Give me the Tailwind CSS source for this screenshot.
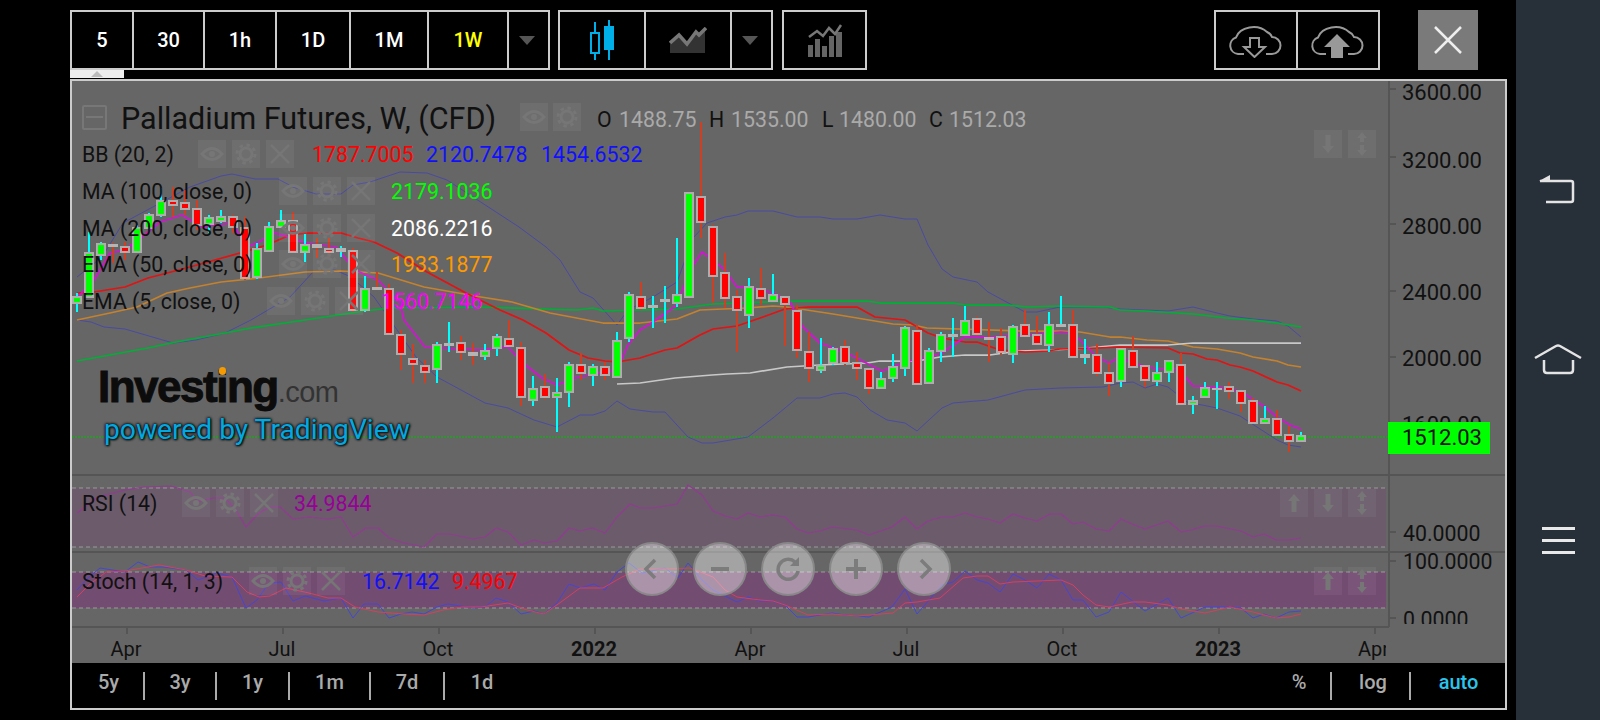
<!DOCTYPE html>
<html lang="en">
<head>
<meta charset="UTF-8" />
<title>Palladium Futures chart</title>
<script src="https://cdn.jsdelivr.net/npm/@tailwindcss/browser@4"></script>
</head>
<body class="bg-black">
<svg width="0" height="0" class="absolute">
	<symbol id="eye" viewBox="0 0 28 28"><path d="M4 14Q14 3 24 14Q14 25 4 14Z" fill="none" stroke="#767676" stroke-width="3"/><circle cx="14" cy="14" r="3" fill="#767676"/></symbol>
	<symbol id="gear" viewBox="0 0 28 28"><circle cx="14" cy="14" r="6" fill="none" stroke="#767676" stroke-width="3"/><circle cx="14" cy="14" r="9" fill="none" stroke="#767676" stroke-width="3" stroke-dasharray="3.5 3.6"/></symbol>
	<symbol id="cross" viewBox="0 0 28 28"><path d="M5 5L23 23M23 5L5 23" stroke="#767676" stroke-width="2.5"/></symbol>
	<symbol id="up" viewBox="0 0 28 28"><path d="M14 5L20 12H16.5V23H11.5V12H8Z" fill="#767676"/></symbol>
	<symbol id="down" viewBox="0 0 28 28"><path d="M14 23L20 16H16.5V5H11.5V16H8Z" fill="#767676"/></symbol>
	<symbol id="updown" viewBox="0 0 28 28"><path d="M14 2L19 8H16V12H12V8H9ZM14 26L19 20H16V15H12V20H9Z" fill="#767676"/></symbol>
</svg>

<div class="w-[1600px] h-[720px] overflow-hidden flex font-['Roboto',sans-serif]">
	<div class="w-[1516px] h-full bg-black">
		<!-- toolbar -->
		<div class="flex h-[60px] mt-[10px] pl-[70px] text-white text-[20px] font-medium">
			<div class="flex border-2 border-[#ccc]">
				<div class="w-[62px] border-r-2 border-[#ccc] flex items-center justify-center">5</div>
				<div class="w-[71px] border-r-2 border-[#ccc] flex items-center justify-center">30</div>
				<div class="w-[72px] border-r-2 border-[#ccc] flex items-center justify-center">1h</div>
				<div class="w-[74px] border-r-2 border-[#ccc] flex items-center justify-center">1D</div>
				<div class="w-[78px] border-r-2 border-[#ccc] flex items-center justify-center">1M</div>
				<div class="w-[80px] border-r-2 border-[#ccc] flex items-center justify-center text-[#ffff00]">1W</div>
				<div class="w-[39px] flex items-center justify-center pr-[4px]">
					<svg width="16" height="9" viewBox="0 0 16 9"><path d="M0 0H16L8 9Z" fill="#555"/></svg>
				</div>
			</div>
			<div class="flex border-2 border-[#ccc] ml-[8px]">
				<div class="w-[86px] border-r-2 border-[#ccc] flex items-center justify-center">
					<svg width="30" height="40" viewBox="0 0 30 40">
						<path d="M8 2V40M22 0V40" stroke="#00aee8" stroke-width="2"/>
						<rect x="4" y="13" width="8" height="20" fill="#000" stroke="#00aee8" stroke-width="2"/>
						<rect x="17" y="6" width="10" height="24" fill="#00aee8"/>
					</svg>
				</div>
				<div class="w-[86px] border-r-2 border-[#ccc] flex items-center justify-center">
					<svg width="38" height="26" viewBox="0 0 38 26">
						<path d="M1 26V17L11 8L18 16L29 6L36 1V26Z" fill="#333"/>
						<path d="M1 16L10 8L18 17L27 5L30 8L37 1" fill="none" stroke="#777" stroke-width="3.5"/>
					</svg>
				</div>
				<div class="w-[39px] flex items-center justify-center pr-[3px]">
					<svg width="16" height="9" viewBox="0 0 16 9"><path d="M0 0H16L8 9Z" fill="#555"/></svg>
				</div>
			</div>
			<div class="flex w-[85px] border-2 border-[#ccc] ml-[9px] items-center justify-center">
				<svg width="36" height="33" viewBox="0 0 36 33">
					<path d="M1 21H6V33H1ZM8 15H13V33H8ZM15 22H20V33H15ZM22 12H27V33H22ZM29 8H35V33H29Z" fill="#777" opacity=".85"/>
					<path d="M2 13L10 7L16 12L22 4L28 10L34 1" fill="none" stroke="#777" stroke-width="2.5"/>
				</svg>
			</div>
			<div class="flex border-2 border-[#ccc] ml-[347px]">
				<div class="w-[82px] border-r-2 border-[#ccc] flex items-center justify-center pr-[2px]">
					<svg width="54" height="36" viewBox="0 0 54 36">
						<path d="M16 32H10A8.5 8.5 0 0 1 8 15.5A18 14 0 0 1 39 10A9 9 0 0 1 44 15A8.5 8.5 0 0 1 44 32H38" fill="none" stroke="#999" stroke-width="2"/>
						<path d="M22 16H31V25H37L26.5 35L16 25H22Z" fill="none" stroke="#999" stroke-width="2"/>
					</svg>
				</div>
				<div class="w-[80px] flex items-center justify-center pr-[2px]">
					<svg width="54" height="36" viewBox="0 0 54 36">
						<path d="M16 32H10A8.5 8.5 0 0 1 8 15.5A18 14 0 0 1 39 10A9 9 0 0 1 44 15A8.5 8.5 0 0 1 44 32H38" fill="none" stroke="#999" stroke-width="2"/>
						<path d="M27 12L40 25H33V36H21V25H14Z" fill="#999"/>
					</svg>
				</div>
			</div>
			<div class="w-[60px] ml-[38px] bg-[#7a7a7a] flex items-center justify-center">
				<svg width="30" height="28" viewBox="0 0 30 28"><path d="M2 1L28 27M28 1L2 27" stroke="#eee" stroke-width="2.5"/></svg>
			</div>
		</div>

		<!-- collapse tab -->
		<div class="ml-[70px] w-[54px] h-[8px] bg-[#eee] flex items-center justify-center">
			<svg width="12" height="6" viewBox="0 0 12 6"><path d="M0 6H12L6 0Z" fill="#bbb"/></svg>
		</div>

		<!-- chart frame -->
		<div class="relative ml-[70px] mt-[1px] w-[1437px] h-[631px] border-2 border-[#ccc] bg-[#666] flex flex-col text-[#111]">
			<svg id="plot" class="absolute left-0 top-0" width="1433" height="627" viewBox="72 81 1433 627"></svg>

			<!-- price pane -->
			<div class="relative h-[394px] pt-[22px] text-[21.3px]">
				<div class="flex items-center h-7 pl-[10px]">
					<span class="w-[25px] h-[25px] border-2 border-[#777] rounded-[2px] flex items-center justify-center"><span class="w-[17px] h-[2px] bg-[#777]"></span></span>
					<span class="ml-[14px] w-[399px] pt-[4px] text-[30.5px] leading-7 whitespace-nowrap">Palladium Futures, W, (CFD)</span>
					<span class="w-7 h-7 bg-white/5"><svg width="28" height="28"><use href="#eye"/></svg></span>
					<span class="w-7 h-7 ml-[5px] bg-white/5"><svg width="28" height="28"><use href="#gear"/></svg></span>
					<span class="ml-[16px] w-[22px] pt-[5px]">O</span><span class="w-[90px] pt-[5px] text-[#aaa]">1488.75</span>
					<span class="w-[22px] pt-[5px]">H</span><span class="w-[91px] pt-[5px] text-[#aaa]">1535.00</span>
					<span class="w-[17px] pt-[5px]">L</span><span class="w-[90px] pt-[5px] text-[#aaa]">1480.00</span>
					<span class="w-[20px] pt-[5px]">C</span><span class="pt-[5px] text-[#aaa]">1512.03</span>
				</div>
				<div class="flex flex-col gap-[8.75px] mt-[9px] pl-[10px]">
					<div class="flex items-center h-7">
						<span class="w-[116px] pt-[2px]">BB (20, 2)</span>
						<span class="flex gap-[6px]">
							<span class="w-7 h-7 bg-white/5"><svg width="28" height="28"><use href="#eye"/></svg></span>
							<span class="w-7 h-7 bg-white/5"><svg width="28" height="28"><use href="#gear"/></svg></span>
							<span class="w-7 h-7 bg-white/5"><svg width="28" height="28"><use href="#cross"/></svg></span>
						</span>
						<span class="ml-[18px] w-[114px] pt-[2px] text-[#ff0000]">1787.7005</span>
						<span class="w-[115px] pt-[2px] text-[#1010ff]">2120.7478</span>
						<span class="pt-[2px] text-[#1010ff]">1454.6532</span>
					</div>
					<div class="flex items-center h-7">
						<span class="w-[197px] pt-[2px]">MA (100, close, 0)</span>
						<span class="flex gap-[6px]">
							<span class="w-7 h-7 bg-white/5"><svg width="28" height="28"><use href="#eye"/></svg></span>
							<span class="w-7 h-7 bg-white/5"><svg width="28" height="28"><use href="#gear"/></svg></span>
							<span class="w-7 h-7 bg-white/5"><svg width="28" height="28"><use href="#cross"/></svg></span>
						</span>
						<span class="ml-[16px] pt-[2px] text-[#00ff00]">2179.1036</span>
					</div>
					<div class="flex items-center h-7">
						<span class="w-[197px] pt-[2px]">MA (200, close, 0)</span>
						<span class="flex gap-[6px]">
							<span class="w-7 h-7 bg-white/5"><svg width="28" height="28"><use href="#eye"/></svg></span>
							<span class="w-7 h-7 bg-white/5"><svg width="28" height="28"><use href="#gear"/></svg></span>
							<span class="w-7 h-7 bg-white/5"><svg width="28" height="28"><use href="#cross"/></svg></span>
						</span>
						<span class="ml-[16px] pt-[2px] text-white">2086.2216</span>
					</div>
					<div class="flex items-center h-7">
						<span class="w-[197px] pt-[2px]">EMA (50, close, 0)</span>
						<span class="flex gap-[6px]">
							<span class="w-7 h-7 bg-white/5"><svg width="28" height="28"><use href="#eye"/></svg></span>
							<span class="w-7 h-7 bg-white/5"><svg width="28" height="28"><use href="#gear"/></svg></span>
							<span class="w-7 h-7 bg-white/5"><svg width="28" height="28"><use href="#cross"/></svg></span>
						</span>
						<span class="ml-[16px] pt-[2px] text-[#ff9900]">1933.1877</span>
					</div>
					<div class="flex items-center h-7">
						<span class="w-[185px] pt-[2px]">EMA (5, close, 0)</span>
						<span class="flex gap-[6px]">
							<span class="w-7 h-7 bg-white/5"><svg width="28" height="28"><use href="#eye"/></svg></span>
							<span class="w-7 h-7 bg-white/5"><svg width="28" height="28"><use href="#gear"/></svg></span>
							<span class="w-7 h-7 bg-white/5"><svg width="28" height="28"><use href="#cross"/></svg></span>
						</span>
						<span class="ml-[18px] pt-[2px] text-[#ff00ff]">1560.7146</span>
					</div>
				</div>

				<div class="absolute left-[1242px] top-[49px] flex gap-[6px]">
					<span class="w-7 h-7 bg-white/5"><svg width="28" height="28"><use href="#down"/></svg></span>
					<span class="w-7 h-7 bg-white/5"><svg width="28" height="28"><use href="#updown"/></svg></span>
				</div>

				<!-- watermark -->
				<div class="absolute left-[26px] top-[284px] flex items-baseline leading-none">
					<span class="text-[44px] font-bold tracking-[-1.5px] text-[#0c0c0c] [-webkit-text-stroke:1px_#0c0c0c] font-['Liberation_Sans',sans-serif]">Investing</span>
					<span class="text-[29px] text-[#333] tracking-[-0.5px] font-['Liberation_Sans',sans-serif]">.com</span>
				</div>
				<div class="absolute left-[147px] top-[286px] w-[7px] h-[8px] rounded-full bg-[#f59a00]"></div>
				<div class="absolute left-[32px] top-[333px] text-[28.2px] leading-8 whitespace-nowrap text-[#00a9e2] [text-shadow:0_0_2px_#161616,0_0_3px_#161616,0_0_3px_#161616,1px_1px_2px_#161616]">powered by TradingView</div>

				<!-- price axis -->
				<span class="absolute left-[1330px] top-[1px] text-[22px] leading-[22px]">3600.00</span>
				<span class="absolute left-[1330px] top-[69px] text-[22px] leading-[22px]">3200.00</span>
				<span class="absolute left-[1330px] top-[135px] text-[22px] leading-[22px]">2800.00</span>
				<span class="absolute left-[1330px] top-[201px] text-[22px] leading-[22px]">2400.00</span>
				<span class="absolute left-[1330px] top-[267px] text-[22px] leading-[22px]">2000.00</span>
				<span class="absolute left-[1330px] top-[333px] text-[22px] leading-[22px]">1600.00</span>
				<div class="absolute left-[1316px] top-[341px] w-[102px] h-[32px] bg-[#00ff00] pl-[14px] text-[22px] leading-[32px]">1512.03</div>
			</div>

			<!-- RSI pane -->
			<div class="relative h-[77px] pt-[14px] pl-[10px] text-[21.3px]">
				<div class="flex items-center h-7">
					<span class="w-[100px] pt-[1px]">RSI (14)</span>
					<span class="flex gap-[6px]">
						<span class="w-7 h-7 bg-white/5"><svg width="28" height="28"><use href="#eye"/></svg></span>
						<span class="w-7 h-7 bg-white/5"><svg width="28" height="28"><use href="#gear"/></svg></span>
						<span class="w-7 h-7 bg-white/5"><svg width="28" height="28"><use href="#cross"/></svg></span>
					</span>
					<span class="ml-[16px] pt-[1px] text-[#990099]">34.9844</span>
				</div>
				<div class="absolute left-[1208px] top-[14px] flex gap-[6px]">
					<span class="w-7 h-7 bg-white/5"><svg width="28" height="28"><use href="#up"/></svg></span>
					<span class="w-7 h-7 bg-white/5"><svg width="28" height="28"><use href="#down"/></svg></span>
					<span class="w-7 h-7 bg-white/5"><svg width="28" height="28"><use href="#updown"/></svg></span>
				</div>
				<span class="absolute left-[1331px] top-[48px] text-[21.3px] leading-[22px]">40.0000</span>
			</div>

			<!-- Stoch pane -->
			<div class="relative h-[75px] pt-[15px] pl-[10px] text-[21.3px]">
				<div class="flex items-center h-7">
					<span class="w-[167px] pt-[1px] whitespace-nowrap">Stoch (14, 1, 3)</span>
					<span class="flex gap-[6px]">
						<span class="w-7 h-7 bg-white/5"><svg width="28" height="28"><use href="#eye"/></svg></span>
						<span class="w-7 h-7 bg-white/5"><svg width="28" height="28"><use href="#gear"/></svg></span>
						<span class="w-7 h-7 bg-white/5"><svg width="28" height="28"><use href="#cross"/></svg></span>
					</span>
					<span class="ml-[17px] w-[90px] pt-[1px] text-[#1010ff]">16.7142</span>
					<span class="pt-[1px] text-[#ff0000]">9.4967</span>
				</div>
				<div class="absolute left-[1242px] top-[15px] flex gap-[6px]">
					<span class="w-7 h-7 bg-white/5"><svg width="28" height="28"><use href="#up"/></svg></span>
					<span class="w-7 h-7 bg-white/5"><svg width="28" height="28"><use href="#updown"/></svg></span>
				</div>
				<span class="absolute left-[1331px] top-[-1px] text-[21.3px] leading-[22px]">100.0000</span>
				<div class="absolute left-[1331px] top-[55px] h-[17px] pt-[2px] overflow-hidden text-[21.3px] leading-[22px]">0.0000</div>
			</div>

			<!-- time axis -->
			<div class="relative h-[36px] text-[20px] leading-[24px]">
				<span class="absolute left-[54px] top-[10px] -translate-x-1/2">Apr</span>
				<span class="absolute left-[210px] top-[10px] -translate-x-1/2">Jul</span>
				<span class="absolute left-[366px] top-[10px] -translate-x-1/2">Oct</span>
				<span class="absolute left-[522px] top-[10px] -translate-x-1/2 font-bold">2022</span>
				<span class="absolute left-[678px] top-[10px] -translate-x-1/2">Apr</span>
				<span class="absolute left-[834px] top-[10px] -translate-x-1/2">Jul</span>
				<span class="absolute left-[990px] top-[10px] -translate-x-1/2">Oct</span>
				<span class="absolute left-[1146px] top-[10px] -translate-x-1/2 font-bold">2023</span>
				<div class="absolute left-[1286px] top-[10px] w-[28px] overflow-hidden">Apr</div>
			</div>

			<!-- range bar -->
			<div class="relative flex items-center h-[45px] bg-black text-[20px] font-medium text-[#aaa]">
				<div class="w-[73px] h-[28px] border-r-2 border-[#aaa] flex items-center justify-center pl-[2px] pb-[7px]">5y</div>
				<div class="w-[72px] h-[28px] border-r-2 border-[#aaa] flex items-center justify-center pb-[7px]">3y</div>
				<div class="w-[73px] h-[28px] border-r-2 border-[#aaa] flex items-center justify-center pb-[7px]">1y</div>
				<div class="w-[81px] h-[28px] border-r-2 border-[#aaa] flex items-center justify-center pb-[7px]">1m</div>
				<div class="w-[74px] h-[28px] border-r-2 border-[#aaa] flex items-center justify-center pb-[7px]">7d</div>
				<div class="w-[74px] h-[28px] flex items-center justify-center pb-[7px]">1d</div>
				<div class="ml-auto w-[64px] h-[28px] border-r-2 border-[#aaa] flex items-center justify-center pb-[7px]">%</div>
				<div class="w-[79px] h-[28px] border-r-2 border-[#aaa] flex items-center justify-center pl-[5px] pb-[7px]">log</div>
				<div class="w-[94px] h-[28px] flex items-center justify-center pl-[1px] pb-[7px] text-[#2bc4ea]">auto</div>
			</div>

			<!-- zoom controls -->
			<div class="absolute left-[553px] top-[461px] flex gap-[14px]">
				<div class="w-[54px] h-[54px] rounded-full bg-white/40 border-2 border-[#888] flex items-center justify-center">
					<svg width="24" height="24" viewBox="0 0 24 24"><path d="M15 3L6 12L15 21" fill="none" stroke="#7c7c7c" stroke-width="3.5"/></svg>
				</div>
				<div class="w-[54px] h-[54px] rounded-full bg-white/40 border-2 border-[#888] flex items-center justify-center">
					<svg width="24" height="24" viewBox="0 0 24 24"><path d="M3 12H21" stroke="#7c7c7c" stroke-width="4"/></svg>
				</div>
				<div class="w-[54px] h-[54px] rounded-full bg-white/40 border-2 border-[#888] flex items-center justify-center">
					<svg width="26" height="26" viewBox="0 0 26 26"><path d="M20 6A10 10 0 1 0 23 15" fill="none" stroke="#7c7c7c" stroke-width="3.5"/><path d="M24 1V10H15Z" fill="#7c7c7c"/></svg>
				</div>
				<div class="w-[54px] h-[54px] rounded-full bg-white/40 border-2 border-[#888] flex items-center justify-center">
					<svg width="24" height="24" viewBox="0 0 24 24"><path d="M2 12H22M12 2V22" stroke="#7c7c7c" stroke-width="4"/></svg>
				</div>
				<div class="w-[54px] h-[54px] rounded-full bg-white/40 border-2 border-[#888] flex items-center justify-center">
					<svg width="24" height="24" viewBox="0 0 24 24"><path d="M9 3L18 12L9 21" fill="none" stroke="#7c7c7c" stroke-width="3.5"/></svg>
				</div>
			</div>
		</div>
	</div>

	<!-- android nav bar -->
	<div class="w-[84px] h-full bg-[#272f38] flex flex-col items-center pt-[172px]">
		<svg class="h-[34px] shrink-0" width="60" height="34" viewBox="0 0 60 34">
			<path d="M12 9H43Q45 9 45 11V28Q45 30 43 30H18" fill="none" stroke="#e4e4e4" stroke-width="2.5"/>
			<path d="M11 9L22 3V10Z" fill="#e4e4e4"/>
		</svg>
		<svg class="mt-[137px] h-[32px] shrink-0" width="60" height="32" viewBox="0 0 60 32">
			<path d="M7 15L28 3Q30 2 32 3L53 15" fill="none" stroke="#e4e4e4" stroke-width="2.5"/>
			<path d="M16 17V27Q16 30 19 30H42Q45 30 45 27V17" fill="none" stroke="#e4e4e4" stroke-width="2.5"/>
		</svg>
		<div class="mt-[152px] flex flex-col gap-[9px]">
			<div class="w-[33px] h-[3px] bg-[#e8e8e8]"></div>
			<div class="w-[33px] h-[3px] bg-[#e8e8e8]"></div>
			<div class="w-[33px] h-[3px] bg-[#e8e8e8]"></div>
		</div>
	</div>
</div>

<script>
	// [type, bodyTop, bodyBottom, wickTop, wickBottom] in page pixels, one per week from x=77, 12px apart
	const candles = [
		['g',297,303,293,312],['g',253,297,232,297],['g',244,255,242,260],['dr',244,246,243,263],['r',247,252,242,260],
		['g',228,252,225,253],['g',215,228,213,230],['g',201,215,188,217],['r',201,205,187,217],['r',203,209,190,215],
		['r',209,225,200,230],['g',218,224,215,233],['g',217,221,210,223],['r',217,227,215,233],['r',228,278,217,280],
		['g',249,277,243,279],['g',227,251,222,252],['g',221,227,210,228],['r',221,252,212,253],['g',245,252,234,262],
		['dr',244,247,238,258],['r',249,252,238,258],['dg',248,251,246,257],['r',251,310,248,312],['g',289,310,276,312],
		['dr',287,289,272,290],['r',289,334,284,334],['r',335,354,330,370],['r',359,364,344,383],['r',366,372,360,383],
		['g',345,369,342,383],['dg',343,345,322,352],['r',343,352,336,360],['dr',352,355,343,365],['g',351,356,344,360],
		['g',337,348,334,356],['r',339,346,320,347],['r',348,397,342,406],['g',389,400,376,406],['r',387,397,374,399],
		['g',393,397,378,432],['g',365,392,362,407],['r',365,373,353,380],['g',367,375,364,386],['r',367,375,362,380],
		['g',341,377,332,378],['g',295,338,292,342],['r',297,308,282,310],['dg',305,307,296,328],['dg',299,301,286,323],
		['g',295,303,238,307],['g',193,297,193,297],['r',197,222,122,238],['r',227,276,225,303],['r',273,298,253,308],
		['r',297,310,290,352],['g',287,315,278,328],['r',289,298,268,305],['g',295,301,274,302],['r',297,304,297,346],
		['r',311,350,305,358],['r',352,368,332,382],['g',366,370,338,373],['g',349,363,347,365],['r',347,363,340,365],
		['r',363,368,352,380],['r',369,388,369,394],['g',379,388,372,388],['g',367,378,354,382],['g',328,368,326,376],
		['r',331,384,325,385],['g',351,383,348,383],['g',335,351,332,362],['dg',334,336,318,357],['g',321,335,306,336],
		['r',319,334,317,336],['dr',337,339,322,362],['r',337,352,328,355],['g',327,354,325,363],['r',325,336,310,337],
		['r',335,344,316,345],['g',325,345,312,352],['dg',324,326,296,327],['r',325,357,310,357],['dg',354,357,339,364],
		['r',355,373,344,376],['r',373,383,363,396],['g',349,381,348,387],['r',351,367,336,367],['r',366,380,365,387],
		['g',373,381,362,386],['g',361,372,361,382],['r',365,404,353,405],['g',401,404,396,414],['g',388,397,382,397],
		['dg',388,389,382,409],['r',387,391,382,399],['r',391,403,390,412],['r',401,423,398,423],['g',419,423,406,423],
		['r',419,435,410,436],['r',435,441,426,452],['g',436,441,432,437]
	];

	const lines = {
		bbUpper: '77,277 102,257 123,223 190,187 221,176 232,174 255,179 278,179 293,187 316,194 341,194 353,185 370,182 400,172 427,173 447,180 473,197 519,227 546,247 560,260 580,292 593,298 617,325 628,310 653,297 677,282 693,238 707,223 725,217 737,215 748,211 773,211 797,217 820,217 833,219 857,219 880,215 905,219 917,219 928,245 942,269 953,277 977,282 988,292 1025,312 1037,312 1060,307 1103,307 1120,309 1168,311 1193,307 1217,313 1230,316 1253,319 1277,321 1288,326 1301,337',
		bbLower: '77,320 91,322 104,327 125,329 173,343 196,340 225,333 251,320 290,297 313,272 335,270 351,277 374,297 395,327 416,357 437,377 485,403 508,408 534,420 557,427 580,415 593,415 605,411 617,401 630,409 653,412 665,412 688,437 702,443 713,443 748,437 773,418 797,398 820,398 833,394 845,393 857,397 870,410 887,420 905,423 917,431 942,408 953,403 988,400 1025,390 1060,388 1103,387 1120,383 1133,382 1145,388 1157,384 1168,387 1187,402 1217,408 1240,416 1277,440 1288,445 1301,447',
		green: '77,361 148,348 171,343 225,333 251,328 305,320 358,312 389,308 481,307 577,310 593,308 603,311 640,310 677,309 713,304 793,301 867,301 880,303 953,303 965,305 1007,305 1027,307 1060,306 1110,307 1120,310 1145,311 1193,314 1227,318 1253,320 1277,323 1301,327',
		orange: '77,320 110,313 137,307 167,293 190,288 221,282 259,278 305,272 341,271 378,273 424,287 481,297 512,302 550,313 603,323 640,323 677,319 700,310 747,308 773,306 787,307 833,314 893,324 913,325 927,328 1020,331 1060,331 1080,332 1110,337 1120,337 1147,340 1168,341 1193,347 1217,349 1240,353 1253,357 1277,361 1288,365 1301,367',
		white: '617,384 640,383 675,378 712,375 727,374 750,373 787,367 820,365 867,363 880,361 917,361 940,357 965,355 990,355 1018,351 1053,350 1087,348 1120,345 1168,345 1193,343 1301,343',
		red: '77,293 94,292 125,287 148,278 190,267 240,253 267,245 290,235 309,233 341,233 358,238 374,242 397,253 427,272 466,293 500,310 523,320 546,333 569,350 588,358 605,361 617,362 640,358 665,350 677,348 700,335 713,329 737,326 763,317 785,309 808,307 857,307 875,317 905,320 928,333 942,338 965,342 977,342 1000,350 1025,352 1048,351 1060,349 1097,348 1120,347 1168,348 1180,353 1193,354 1207,359 1217,360 1230,365 1240,367 1253,371 1277,382 1288,385 1301,391',
		magenta: '77,298 94,280 110,253 125,250 142,237 160,222 182,215 202,227 232,223 247,247 259,242 274,233 290,237 305,243 336,247 355,270 378,280 400,303 404,320 425,347 443,348 481,350 508,347 523,363 542,378 557,385 575,378 605,372 617,370 628,345 640,330 653,322 677,305 690,270 702,252 713,260 725,270 737,287 748,287 773,293 790,302 803,327 820,343 845,352 870,365 882,371 905,362 928,357 942,353 965,337 988,337 1025,335 1061,332 1073,333 1097,357 1109,363 1120,357 1133,363 1157,369 1180,370 1193,386 1217,387 1240,391 1265,407 1277,417 1290,425 1301,429',
		rsi: '77,513 98,497 125,490 144,487 171,486 190,492 198,502 213,498 225,498 236,510 246,527 259,513 270,507 280,507 293,519 309,517 328,519 341,517 353,537 366,528 378,528 389,538 404,543 424,547 437,534 450,534 473,539 485,537 496,528 508,532 521,545 534,540 544,543 557,541 569,528 580,531 592,528 605,533 617,517 630,504 640,508 653,508 677,504 688,485 702,495 713,511 725,516 737,519 748,513 760,517 772,515 785,517 797,529 808,533 820,531 832,527 857,530 869,535 892,527 905,517 917,529 928,521 942,517 953,517 965,513 977,517 988,519 1000,523 1013,514 1025,518 1037,521 1050,514 1061,514 1073,524 1083,522 1096,529 1109,531 1121,519 1132,524 1145,529 1168,521 1181,532 1191,530 1205,526 1216,526 1241,531 1253,537 1264,534 1276,540 1289,540 1301,538',
		stochBlue: '77,590 89,577 100,568 125,572 138,562 150,567 163,567 186,570 198,580 217,573 232,577 246,608 257,600 269,583 281,582 293,601 305,596 324,601 341,598 353,618 364,604 378,604 389,618 401,614 412,612 424,614 437,607 448,604 473,608 485,607 496,598 508,602 521,614 534,611 544,614 557,603 569,584 580,588 594,584 605,590 617,572 629,563 642,573 665,568 678,578 688,563 702,580 713,590 737,602 748,597 760,601 772,601 785,605 797,617 808,617 832,613 845,615 869,617 892,607 905,589 917,614 942,585 953,582 965,571 977,580 988,583 1000,592 1013,574 1025,580 1037,588 1049,574 1061,580 1073,600 1083,600 1096,617 1109,612 1121,592 1145,611 1168,598 1181,618 1205,607 1230,607 1241,608 1253,618 1264,614 1276,618 1289,612 1301,611',
		stochRed: '77,597 89,585 106,572 125,571 159,565 186,570 205,576 232,577 247,592 259,597 270,596 286,588 309,593 328,598 341,598 355,607 378,612 404,614 424,615 443,610 462,607 481,607 508,603 527,610 544,614 561,602 580,588 603,588 622,577 640,569 667,569 690,568 713,577 725,590 737,597 760,600 773,601 785,605 808,615 832,614 857,616 893,613 905,603 917,602 940,598 963,578 977,576 988,576 1000,584 1013,582 1037,581 1061,580 1073,585 1083,595 1096,605 1109,607 1132,602 1145,602 1168,605 1181,609 1205,613 1230,607 1253,612 1276,618 1289,617 1301,614'
	};

	const line = (pts, color, width) => `<polyline points="${pts}" fill="none" stroke="${color}" stroke-width="${width}" stroke-linejoin="round"/>`;
	const hline = (y, x1, x2, color, width, dash) => `<line x1="${x1}" x2="${x2}" y1="${y}" y2="${y}" stroke="${color}" stroke-width="${width}"${dash ? ` stroke-dasharray="${dash}"` : ''}/>`;

	let svg = '';
	// indicator bands
	svg += '<rect x="72" y="488" width="1314" height="59" fill="#6b5b6b"/>';
	svg += '<rect x="72" y="572" width="1314" height="36" fill="#734c72"/>';
	[488, 547, 572, 608].forEach((y) => { svg += hline(y, 72, 1386, '#9a9a9a', 1, '4 3'); });

	// pane separators and axis
	svg += hline(475, 72, 1505, '#555', 2);
	svg += hline(552, 72, 1505, '#555', 2);
	svg += hline(627, 72, 1389, '#555', 2);
	svg += '<line x1="1389" x2="1389" y1="81" y2="627" stroke="#555" stroke-width="2"/>';
	[89, 157, 224, 291, 357, 423, 437, 532, 561, 618].forEach((y) => { svg += hline(y, 1389, 1396, '#555', 2); });
	[127, 283, 439, 595, 751, 907, 1063, 1219, 1375].forEach((x) => {
		svg += `<line x1="${x}" x2="${x}" y1="627" y2="634" stroke="#555" stroke-width="2"/>`;
	});

	// last price
	svg += hline(437, 72, 1389, '#00c000', 1, '2 1');

	svg += line(lines.bbUpper, '#4a4aa4', 1);
	svg += line(lines.bbLower, '#4a4aa4', 1);
	svg += line(lines.green, '#00b036', 1.75);
	svg += line(lines.orange, '#c4822e', 1.75);
	svg += line(lines.white, '#c8c8c8', 1.75);
	svg += line(lines.red, '#e41212', 1.75);
	svg += line(lines.magenta, '#d612d6', 1.75);
	svg += line(lines.rsi, '#933a93', 1.2);
	svg += line(lines.stochBlue, '#4646d4', 1);
	svg += line(lines.stochRed, '#d44060', 1);

	candles.forEach(([type, top, bottom, wickTop, wickBottom], i) => {
		const x = 77 + 12 * i;
		const up = type === 'g' || type === 'dg';
		const wick = up ? '#00ffff' : '#cc4125';
		svg += `<rect x="${x - 1}" y="${wickTop}" width="2" height="${wickBottom - wickTop}" fill="${wick}"/>`;
		if (type[0] === 'd') {
			svg += `<rect x="${x - 5}" y="${top}" width="10" height="${bottom - top + 1}" fill="#b4b4b4"/>`;
		} else {
			svg += `<rect x="${x - 4}" y="${top}" width="8" height="${bottom - top}" fill="${up ? '#00ff00' : '#ff0000'}" stroke="#adadad" stroke-width="2"/>`;
		}
	});

	document.getElementById('plot').innerHTML = svg;
</script>
</body>
</html>
